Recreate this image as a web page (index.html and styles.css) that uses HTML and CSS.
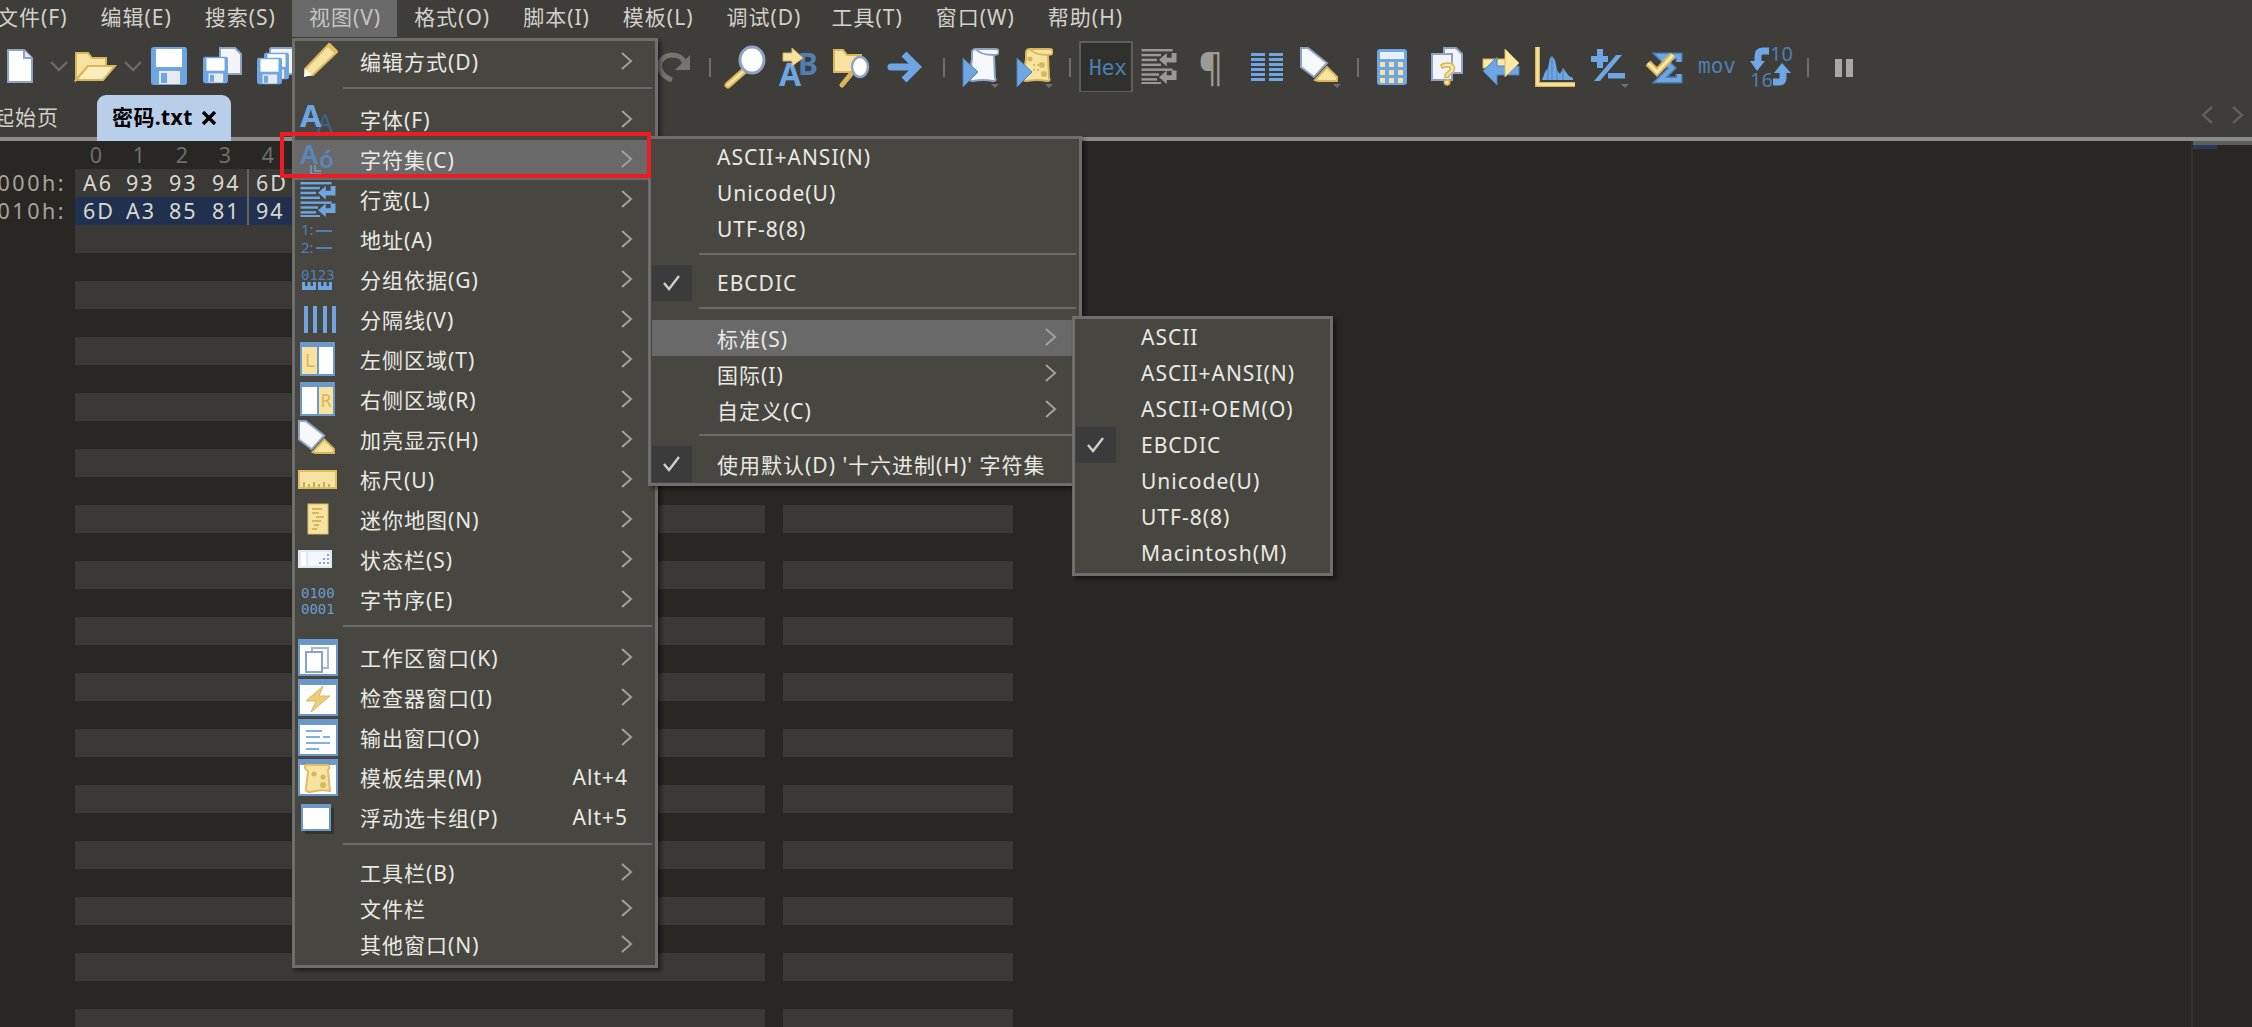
FILE: index.html
```html
<!DOCTYPE html>
<html lang="zh-CN">
<head>
  <meta charset="UTF-8" />
  <title>010 Editor</title>
  <link rel="stylesheet" href="styles.css">
</head>
<body>

  <svg class="defs" width="0" height="0">
    <symbol id="floppy" viewBox="0 0 36 38">
      <rect x="0" y="0" width="36" height="38" rx="3" fill="#6ea6e4"/>
      <rect x="5" y="2" width="26" height="18" fill="#fff"/>
      <rect x="8" y="24" width="21" height="13" fill="#e8eaf0"/>
      <rect x="10" y="26" width="6" height="10" fill="#6ea6e4"/>
    </symbol>
    <symbol id="wrap" viewBox="0 0 36 36">
      <g fill="currentColor">
        <rect x="0" y="0" width="32" height="2.5"/><rect x="0" y="5" width="20" height="2.5"/><rect x="0" y="10" width="16" height="2.5"/><rect x="0" y="15" width="20" height="2.5"/>
        <polygon points="31,4 36,4 36,14 26,14 26,18 18,11 26,4 26,9 31,9"/>
        <rect x="0" y="20" width="32" height="2.5"/><rect x="0" y="25" width="18" height="2.5"/><rect x="0" y="30" width="16" height="2.5"/><rect x="0" y="34" width="20" height="2"/>
        <polygon points="31,22 36,22 36,32 26,32 26,36 18,29 26,22 26,27 31,27"/>
      </g>
    </symbol>
    <symbol id="marker" viewBox="0 0 38 36">
      <polygon points="15,33 27,20 37,30 37,34 18,34" fill="#f6e3a1" stroke="#d9b65b" stroke-width="2"/>
      <polygon points="1,1 8,1 27,16 14,30 1,20" fill="#f7f8fc" stroke="#8ea3c4" stroke-width="2"/>
    </symbol>
    <symbol id="scroll" viewBox="0 0 32 36">
      <path d="M5 6 Q5 2 9 2 H28 Q32 2 32 5 Q32 8 27 8 L28 31 Q30 34 26 34 Q16 32 6 34 Q1 34 2 30 L5 12Z" fill="currentColor"/>
      <path d="M9 2 Q13 8 27 8" fill="none"/>
    </symbol>
    <symbol id="win" viewBox="0 0 40 38">
      <rect x="1" y="2" width="38" height="35" fill="#fff" stroke="#6c97c9" stroke-width="2"/>
      <rect x="1" y="1" width="38" height="6" rx="2" fill="#6c97c9"/>
    </symbol>
    <symbol id="chev" viewBox="0 0 12 18">
      <polyline points="1,1 10,9 1,17" fill="none" stroke="#a0a09c" stroke-width="2"/>
    </symbol>
    <symbol id="check" viewBox="0 0 40 36">
      <polyline points="12,18 17,24 27,11" fill="none" stroke="#cfcfca" stroke-width="2.4"/>
    </symbol>
  </svg>

  <nav class="menubar">
    <span class="menu-title">文件(F)</span>
    <span class="menu-title">编辑(E)</span>
    <span class="menu-title">搜索(S)</span>
    <span class="menu-title active">视图(V)</span>
    <span class="menu-title">格式(O)</span>
    <span class="menu-title">脚本(I)</span>
    <span class="menu-title">模板(L)</span>
    <span class="menu-title">调试(D)</span>
    <span class="menu-title narrow">工具(T)</span>
    <span class="menu-title">窗口(W)</span>
    <span class="menu-title">帮助(H)</span>
  </nav>

  <div class="toolbar">
    <svg width="45" height="52" viewBox="0 40 45 52"><path d="M8 50 H24 L32 58 V82 H8Z" fill="#fff" stroke="#8ea3c4" stroke-width="2"/><path d="M24 50 V58 H32" fill="#dfe5f0" stroke="#8ea3c4" stroke-width="2"/></svg>
    <svg width="25" height="52" viewBox="45 40 25 52"><polyline points="51,62 59,70 67,62" fill="none" stroke="#6b6b68" stroke-width="2.4"/></svg>
    <svg width="50" height="52" viewBox="70 40 50 52"><path d="M76 80 V53 H88 L92 58 H106 V66 H88 L76 80Z" fill="#f6e3a1" stroke="#d9b65b" stroke-width="2"/><path d="M76 80 L88 66 H115 L103 80Z" fill="#fbeebc" stroke="#d9b65b" stroke-width="2"/></svg>
    <svg width="28" height="52" viewBox="120 40 28 52"><polyline points="125,62 133,70 141,62" fill="none" stroke="#6b6b68" stroke-width="2.4"/></svg>
    <svg width="50" height="52" viewBox="148 40 50 52"><use href="#floppy" x="151" y="47" width="36" height="38"/></svg>
    <svg width="54" height="52" viewBox="198 40 54 52"><path d="M220 48 H235 L241 54 V74 H220Z" fill="#f2f4fa" stroke="#8ea3c4" stroke-width="2"/><use href="#floppy" x="203" y="56" width="25" height="28"/></svg>
    <svg width="44" height="52" viewBox="252 40 44 52"><rect x="270" y="48" width="24" height="26" rx="2" fill="#f2f4fa" stroke="#8ea3c4" stroke-width="2"/><use href="#floppy" x="264" y="52" width="25" height="28"/><use href="#floppy" x="257" y="57" width="25" height="28"/></svg>
    <span class="tb-hidden"></span>
    <svg width="48" height="52" viewBox="652 40 48 52"><path d="M672 80 C655 74 656 56 672 55 C680 55 683 58 685 64" fill="none" stroke="#75756f" stroke-width="5"/><polygon points="690,55 690,70 675,70" fill="#75756f"/></svg>
    <svg width="20" height="52" viewBox="700 40 20 52"><rect x="709" y="58" width="2" height="19" fill="#6e6e6a"/></svg>
    <svg width="55" height="52" viewBox="720 40 55 52"><path d="M745 70 L728 85" stroke="#d9b65b" stroke-width="7" stroke-linecap="round"/><path d="M745 70 L728 85" stroke="#f6e3a1" stroke-width="3" stroke-linecap="round"/><ellipse cx="752" cy="60" rx="12" ry="13" fill="#fff" stroke="#8ea3c4" stroke-width="3"/></svg>
    <svg width="53" height="52" viewBox="775 40 53 52"><text class="ico-bold" x="798" y="75" font-size="30" fill="#4f7fb4">B</text><text class="ico-bold" x="779" y="86" font-size="32" fill="#6ea6e4">A</text><polygon points="783,53 792,53 792,48 803,58 792,66 792,61 783,61" fill="#f6e3a1" stroke="#d9b65b"/></svg>
    <svg width="54" height="52" viewBox="828 40 54 52"><path d="M834 72 V50 H843 L847 55 H861 V72Z" fill="#f6e3a1" stroke="#d9b65b" stroke-width="2"/><path d="M851 74 L842 85" stroke="#d9b65b" stroke-width="5" stroke-linecap="round"/><ellipse cx="860" cy="67" rx="8" ry="10" fill="#fff" stroke="#8ea3c4" stroke-width="2.5"/></svg>
    <svg width="53" height="52" viewBox="882 40 53 52"><path d="M891 67 H916" stroke="#6ea6e4" stroke-width="7" stroke-linecap="round"/><polyline points="904,54 917,67 904,80" fill="none" stroke="#6ea6e4" stroke-width="7"/></svg>
    <svg width="20" height="52" viewBox="935 40 20 52"><rect x="943" y="58" width="2" height="19" fill="#6e6e6a"/></svg>
    <svg class="white" width="55" height="52" viewBox="955 40 55 52"><use href="#scroll" x="967" y="47" width="32" height="36" stroke="#8ea3c4" stroke-width="2"/><polygon points="963,58 978,72 963,87" fill="#6ea6e4" stroke="#4f7fb4"/><polygon points="991,84 999,84 995,88" fill="#6e6e6a"/></svg>
    <svg class="yellow" width="52" height="52" viewBox="1010 40 52 52"><use href="#scroll" x="1021" y="47" width="32" height="36" stroke="#d9b65b" stroke-width="2"/><circle cx="1030" cy="59" r="2.500" fill="#d9b65b"/><circle cx="1042" cy="65" r="3" fill="#d9b65b"/><circle cx="1044" cy="74" r="3" fill="#d9b65b"/><path d="M1033 65 h2 M1037 65 h2 M1033 70 h2 M1037 70 h2" stroke="#d9b65b" stroke-width="2"/><polygon points="1017,58 1032,72 1017,87" fill="#6ea6e4" stroke="#4f7fb4"/><polygon points="1045,84 1053,84 1049,88" fill="#6e6e6a"/></svg>
    <svg width="14" height="52" viewBox="1062 40 14 52"><rect x="1069" y="58" width="2" height="19" fill="#6e6e6a"/></svg>
    <svg width="60" height="52" viewBox="1076 40 60 52"><rect x="1080" y="42" width="52" height="50" fill="#30302c" stroke="#5e5e5c" stroke-width="2"/><text class="ico-mono" x="1108" y="75" font-size="21" text-anchor="middle" letter-spacing="1.200" fill="#4f7fb4">Hex</text></svg>
    <svg class="grey" width="54" height="52" viewBox="1136 40 54 52"><use href="#wrap" x="1141" y="49" width="36" height="35"/></svg>
    <svg width="50" height="52" viewBox="1190 40 50 52"><text class="ico-plain" x="1211" y="81" font-size="38" text-anchor="middle" fill="#9c9c97">¶</text></svg>
    <svg width="52" height="52" viewBox="1240 40 52 52"><g fill="#6ea6e4"><rect x="1251" y="53" width="14" height="3"/><rect x="1269" y="53" width="14" height="3"/><rect x="1251" y="58" width="14" height="3"/><rect x="1269" y="58" width="14" height="3"/><rect x="1251" y="63" width="14" height="3"/><rect x="1269" y="63" width="14" height="3"/><rect x="1251" y="68" width="14" height="3"/><rect x="1269" y="68" width="14" height="3"/><rect x="1251" y="73" width="14" height="3"/><rect x="1269" y="73" width="14" height="3"/><rect x="1251" y="78" width="14" height="3"/><rect x="1269" y="78" width="14" height="3"/></g></svg>
    <svg width="56" height="52" viewBox="1292 40 56 52"><use href="#marker" x="1300" y="47" width="38" height="36"/><polygon points="1333,84 1341,84 1337,88" fill="#6e6e6a"/></svg>
    <svg width="20" height="52" viewBox="1348 40 20 52"><rect x="1357" y="58" width="2" height="19" fill="#6e6e6a"/></svg>
    <svg width="52" height="52" viewBox="1368 40 52 52"><rect x="1377" y="49" width="30" height="36" rx="3" fill="#6ea6e4"/><rect x="1380" y="52" width="24" height="7" fill="#e8f0fa"/><g fill="#f6e3a1"><rect x="1380" y="62" width="5" height="5"/><rect x="1389" y="62" width="5" height="5"/><rect x="1398" y="62" width="5" height="5"/><rect x="1380" y="70" width="5" height="5"/><rect x="1389" y="70" width="5" height="5"/><rect x="1398" y="70" width="5" height="5"/><rect x="1380" y="78" width="5" height="5"/><rect x="1389" y="78" width="5" height="5"/><rect x="1398" y="78" width="5" height="5"/></g></svg>
    <svg width="55" height="52" viewBox="1420 40 55 52"><path d="M1444 48 H1456 L1462 54 V73 H1444Z" fill="#f2f4fa" stroke="#8ea3c4" stroke-width="2"/><rect x="1432" y="54" width="20" height="26" fill="#f2f4fa" stroke="#8ea3c4" stroke-width="2"/><text class="ico-bold marked" x="1448" y="85" font-size="30" text-anchor="middle">?</text></svg>
    <svg width="53" height="52" viewBox="1475 40 53 52"><rect x="1483" y="59" width="24" height="9" fill="#fbe9a8" stroke="#d9b65b"/><polygon points="1483,71 1497,57 1497,66 1519,66 1519,75 1497,75 1497,85" fill="#6ea6e4" stroke="#4f7fb4"/><polygon points="1505,49 1519,63 1505,77" fill="#fbe9a8" stroke="#d9b65b"/></svg>
    <svg width="57" height="52" viewBox="1528 40 57 52"><polygon points="1542,80 1545,72 1548,68 1550,58 1552,56 1555,60 1557,70 1560,74 1563,68 1566,72 1569,76 1573,78 1573,80" fill="#6ea6e4"/><path d="M1548 80 V68 M1552 80 V56 M1557 80 V70 M1563 80 V68" stroke="#4f7fb4"/><path d="M1537.500 47 V84.500 H1575" fill="none" stroke="#d9b65b" stroke-width="5"/><path d="M1537.500 47 V84.500 H1575" fill="none" stroke="#f6e3a1" stroke-width="2.500"/></svg>
    <svg width="55" height="52" viewBox="1585 40 55 52"><g fill="#6ea6e4"><rect x="1591" y="56" width="17" height="6"/><rect x="1597" y="49" width="6" height="19"/><polygon points="1616,55 1622,55 1600,81 1594,81"/><rect x="1608" y="73" width="17" height="5.500"/></g><polygon points="1621,84 1629,84 1625,88" fill="#6e6e6a"/></svg>
    <svg width="50" height="52" viewBox="1640 40 50 52"><path d="M1679 62 V56 H1660 L1672 68 L1660 80 H1679 V74" fill="none" stroke="#4f7fb4" stroke-width="7"/><path d="M1679 62 V56 H1660 L1672 68 L1660 80 H1679 V74" fill="none" stroke="#6ea6e4" stroke-width="4"/><polyline points="1648,63 1657,72 1673,55" fill="none" stroke="#d9b65b" stroke-width="7"/><polyline points="1648,63 1657,72 1673,55" fill="none" stroke="#fbe9a8" stroke-width="3"/></svg>
    <svg width="55" height="52" viewBox="1690 40 55 52"><text class="ico-mono" x="1717" y="73" font-size="21" text-anchor="middle" letter-spacing="1" fill="#4f7fb4">mov</text></svg>
    <svg width="53" height="52" viewBox="1745 40 53 52"><text class="ico-plain" x="1770" y="61" font-size="20" fill="#4f7fb4">10</text><text class="ico-plain" x="1750" y="87" font-size="20" fill="#4f7fb4">16</text><path d="M1769 51 H1763 Q1758 51 1758 56 V62" fill="none" stroke="#6ea6e4" stroke-width="7"/><polygon points="1750,61 1765,61 1757,71" fill="#6ea6e4"/><path d="M1773 82 H1779 Q1783 82 1783 78 V72" fill="none" stroke="#6ea6e4" stroke-width="7"/><polygon points="1774,73 1791,73 1782,63" fill="#6ea6e4"/></svg>
    <svg width="22" height="52" viewBox="1798 40 22 52"><rect x="1807" y="58" width="2" height="19" fill="#6e6e6a"/></svg>
    <svg width="40" height="52" viewBox="1820 40 40 52"><rect x="1835" y="59" width="7" height="18" fill="#a8a8a3"/><rect x="1846" y="59" width="7" height="18" fill="#a8a8a3"/></svg>
  </div>

  <div class="tabbar">
    <span class="tab">起始页</span>
    <span class="tab current">密码.txt<svg class="tab-close" width="16" height="14" viewBox="0 0 16 14"><path d="M2 1 L14 13 M14 1 L2 13" stroke="#000" stroke-width="3.400"/></svg></span>
    <svg class="tab-nav" width="12" height="18" viewBox="0 0 12 18"><polyline points="11,1 2,9 11,17" fill="none" stroke="#5f5f5b" stroke-width="2.400"/></svg>
    <svg class="tab-nav" width="12" height="18" viewBox="0 0 12 18"><polyline points="1,1 10,9 1,17" fill="none" stroke="#5f5f5b" stroke-width="2.400"/></svg>
  </div>

  <main class="editor">
    <div class="hexview" id="hexview">
      <div class="ruler">
        <span class="cell">0</span><span class="cell">1</span><span class="cell">2</span><span class="cell">3</span><span class="cell">4</span>
      </div>
    </div>
    <div class="minimap"><div class="mini-top"></div><div class="mini-sel"></div></div>
  </main>

  <!-- 视图 menu -->
  <div class="popup view-menu">
    <div class="item"><span class="ico"><svg width="44" height="40"><polygon points="8,27 32,2 40,10 16,33 8,33" fill="#f6e3a1" stroke="#d9b65b" stroke-width="2"/><polygon points="30,4 33,1 41,9 38,12" fill="#e0bd5f"/><polygon points="8,27 15,33 7,35" fill="#fff"/></svg></span><span class="label">编辑方式(D)</span><svg class="arrow"><use href="#chev"/></svg></div>
    <div class="sep"></div>
    <div class="item"><span class="ico"><svg width="44" height="40"><text class="ico-plain" x="20" y="32" font-size="25" fill="#3f618c">A</text><text class="ico-bold" x="3" y="27" font-size="31" fill="#6ea6e4">A</text></svg></span><span class="label">字体(F)</span><svg class="arrow"><use href="#chev"/></svg></div>
    <div class="item hot"><span class="ico"><svg width="44" height="40"><text class="ico-semi" x="3" y="24" font-size="27" fill="#5a86ba">A</text><text class="ico-semi" x="22" y="28" font-size="24" fill="#5a86ba">ó</text><path d="M14 25 V34 H24 M18 25 V31 H24" fill="none" stroke="#7a9cc4" stroke-width="1.500"/></svg></span><span class="label">字符集(C)</span><svg class="arrow"><use href="#chev"/></svg></div>
    <div class="item"><span class="ico"><svg class="blue" width="44" height="40"><use href="#wrap" x="3" y="2" width="36" height="35"/></svg></span><span class="label">行宽(L)</span><svg class="arrow"><use href="#chev"/></svg></div>
    <div class="item"><span class="ico"><svg width="44" height="40"><text class="ico-plain" x="4" y="15" font-size="15" fill="#4f7fb4">1:</text><text class="ico-plain" x="4" y="33" font-size="15" fill="#4f7fb4">2:</text><rect x="19" y="10" width="16" height="2" fill="#4f7fb4"/><rect x="19" y="27" width="16" height="2" fill="#4f7fb4"/></svg></span><span class="label">地址(A)</span><svg class="arrow"><use href="#chev"/></svg></div>
    <div class="item"><span class="ico"><svg width="44" height="40"><text class="ico-mono" x="4" y="20" font-size="14" fill="#4f7fb4">0123</text><path d="M5 22 h3 v4 h2.500 v-4 h3 v4 h2.500 v-4 h3 v8 h-14z M21 22 h3 v4 h2.500 v-4 h3 v4 h2.500 v-4 h3 v8 h-14z" fill="#6ea6e4"/></svg></span><span class="label">分组依据(G)</span><svg class="arrow"><use href="#chev"/></svg></div>
    <div class="item"><span class="ico"><svg width="44" height="40"><g fill="#6ea6e4"><rect x="7" y="6" width="4" height="27"/><rect x="16" y="6" width="4" height="27"/><rect x="26" y="6" width="4" height="27"/><rect x="35" y="6" width="4" height="27"/></g></svg></span><span class="label">分隔线(V)</span><svg class="arrow"><use href="#chev"/></svg></div>
    <div class="item"><span class="ico"><svg width="44" height="40"><rect x="4" y="3" width="33" height="32" fill="#fff" stroke="#6c97c9" stroke-width="2"/><rect x="4" y="2" width="33" height="5" fill="#6c97c9"/><rect x="5" y="7" width="15" height="27" fill="#f6e3a1"/><rect x="20" y="7" width="2" height="27" fill="#6c97c9"/><text class="ico-mono" x="8" y="27" font-size="17" fill="#d9b65b">L</text></svg></span><span class="label">左侧区域(T)</span><svg class="arrow"><use href="#chev"/></svg></div>
    <div class="item"><span class="ico"><svg width="44" height="40"><rect x="4" y="3" width="33" height="32" fill="#fff" stroke="#6c97c9" stroke-width="2"/><rect x="4" y="2" width="33" height="5" fill="#6c97c9"/><rect x="22" y="7" width="14" height="27" fill="#f6e3a1"/><rect x="20" y="7" width="2" height="27" fill="#6c97c9"/><text class="ico-mono" x="24" y="27" font-size="17" fill="#d9b65b">R</text></svg></span><span class="label">右侧区域(R)</span><svg class="arrow"><use href="#chev"/></svg></div>
    <div class="item"><span class="ico"><svg width="44" height="40"><use href="#marker" x="1" y="0" width="37" height="35"/></svg></span><span class="label">加亮显示(H)</span><svg class="arrow"><use href="#chev"/></svg></div>
    <div class="item"><span class="ico"><svg width="44" height="40"><rect x="2" y="11" width="37" height="17" fill="#f6e3a1" stroke="#e0bd5f" stroke-width="2"/><path d="M7 27 V22 M12 27 V24 M17 27 V22 M22 27 V24 M27 27 V22 M32 27 V24" stroke="#b89a4a" stroke-width="1.500"/></svg></span><span class="label">标尺(U)</span><svg class="arrow"><use href="#chev"/></svg></div>
    <div class="item"><span class="ico"><svg width="44" height="40"><rect x="11" y="4" width="20" height="30" fill="#f6e3a1" stroke="#e0bd5f"/><path d="M15 9 H25 M15 13 H22 M19 17 H27 M15 21 H24 M17 25 H22 M15 29 H20" stroke="#d9b65b" stroke-width="2"/></svg></span><span class="label">迷你地图(N)</span><svg class="arrow"><use href="#chev"/></svg></div>
    <div class="item"><span class="ico"><svg width="44" height="40"><rect x="1" y="10" width="34" height="18" fill="#dfe7f3"/><rect x="4" y="12" width="5" height="14" fill="#fff"/><rect x="11" y="12" width="22" height="14" fill="#f4f7fc"/><path d="M22 23 H24 M26 23 H28 M30 23 H32 M26 19 H28 M30 19 H32 M30 15 H32" stroke="#8ea3c4" stroke-width="2"/></svg></span><span class="label">状态栏(S)</span><svg class="arrow"><use href="#chev"/></svg></div>
    <div class="item"><span class="ico"><svg width="44" height="40"><text class="ico-mono" x="4" y="18" font-size="14" fill="#6a9bd0">0100</text><text class="ico-mono" x="4" y="34" font-size="14" fill="#6a9bd0">0001</text></svg></span><span class="label">字节序(E)</span><svg class="arrow"><use href="#chev"/></svg></div>
    <div class="sep"></div>
    <div class="item"><span class="ico"><svg width="44" height="40"><use href="#win" x="1" y="0" width="40" height="38"/><rect x="15" y="10" width="16" height="20" fill="#fff" stroke="#a9b8d2" stroke-width="2"/><rect x="9" y="14" width="16" height="20" fill="#fff" stroke="#8ea3c4" stroke-width="2"/></svg></span><span class="label">工作区窗口(K)</span><svg class="arrow"><use href="#chev"/></svg></div>
    <div class="item"><span class="ico"><svg width="44" height="40"><use href="#win" x="1" y="0" width="40" height="38"/><polygon points="26,8 9,23 19,23 14,34 33,18 22,18" fill="#eccf7e" stroke="#d9b65b"/></svg></span><span class="label">检查器窗口(I)</span><svg class="arrow"><use href="#chev"/></svg></div>
    <div class="item"><span class="ico"><svg width="44" height="40"><use href="#win" x="1" y="0" width="40" height="38"/><path d="M9 13 H25 M9 19 H23 M26 19 H33 M9 25 H33 M9 31 H22" stroke="#7fb0e8" stroke-width="2"/></svg></span><span class="label">输出窗口(O)</span><svg class="arrow"><use href="#chev"/></svg></div>
    <div class="item"><span class="ico"><svg width="44" height="40"><use href="#win" x="1" y="0" width="40" height="38"/><path d="M9 7 H31 Q34 9 31 12 L33 33 Q24 31 13 34 Q8 34 9 30 L11 13 Q6 10 9 7Z" fill="#f6e3a1" stroke="#e0bd5f" stroke-width="2"/><circle cx="17" cy="16" r="2.500" fill="#d9b65b"/><circle cx="26" cy="19" r="2.500" fill="#d9b65b"/><circle cx="26" cy="27" r="3" fill="#d9b65b"/></svg></span><span class="label">模板结果(M)</span><span class="key">Alt+4</span></div>
    <div class="item"><span class="ico"><svg width="44" height="40"><rect x="8" y="10" width="29" height="26" fill="#35342f"/><rect x="5" y="7" width="28" height="25" fill="#fff" stroke="#6c97c9" stroke-width="2"/><rect x="5" y="6" width="28" height="4" rx="1" fill="#6c97c9"/></svg></span><span class="label">浮动选卡组(P)</span><span class="key">Alt+5</span></div>
    <div class="sep sep-sm"></div>
    <div class="item plain"><span class="ico"></span><span class="label">工具栏(B)</span><svg class="arrow"><use href="#chev"/></svg></div>
    <div class="item plain"><span class="ico"></span><span class="label">文件栏</span><svg class="arrow"><use href="#chev"/></svg></div>
    <div class="item plain"><span class="ico"></span><span class="label">其他窗口(N)</span><svg class="arrow"><use href="#chev"/></svg></div>
  </div>

  <!-- 字符集 submenu -->
  <div class="popup charset-menu">
    <div class="item plain"><span class="ico"></span><span class="label">ASCII+ANSI(N)</span></div>
    <div class="item plain"><span class="ico"></span><span class="label">Unicode(U)</span></div>
    <div class="item plain"><span class="ico"></span><span class="label">UTF-8(8)</span></div>
    <div class="sep"></div>
    <div class="item plain"><span class="ico"><svg class="tick" width="40" height="36"><use href="#check"/></svg></span><span class="label">EBCDIC</span></div>
    <div class="sep sep-lg"></div>
    <div class="item plain hot"><span class="ico"></span><span class="label">标准(S)</span><svg class="arrow"><use href="#chev"/></svg></div>
    <div class="item plain"><span class="ico"></span><span class="label">国际(I)</span><svg class="arrow"><use href="#chev"/></svg></div>
    <div class="item plain"><span class="ico"></span><span class="label">自定义(C)</span><svg class="arrow"><use href="#chev"/></svg></div>
    <div class="sep"></div>
    <div class="item plain"><span class="ico"><svg class="tick" width="40" height="36"><use href="#check"/></svg></span><span class="label">使用默认(D) '十六进制(H)' 字符集</span></div>
  </div>

  <!-- 标准 submenu -->
  <div class="popup standard-menu">
    <div class="item plain"><span class="ico"></span><span class="label">ASCII</span></div>
    <div class="item plain"><span class="ico"></span><span class="label">ASCII+ANSI(N)</span></div>
    <div class="item plain"><span class="ico"></span><span class="label">ASCII+OEM(O)</span></div>
    <div class="item plain"><span class="ico"><svg class="tick" width="40" height="36"><use href="#check"/></svg></span><span class="label">EBCDIC</span></div>
    <div class="item plain"><span class="ico"></span><span class="label">Unicode(U)</span></div>
    <div class="item plain"><span class="ico"></span><span class="label">UTF-8(8)</span></div>
    <div class="item plain"><span class="ico"></span><span class="label">Macintosh(M)</span></div>
  </div>

  <div class="redbox"></div>

  <script>
    const data = [
      { addr: "0000h:", bytes: ["A6", "93", "93", "94", "6D"] },
      { addr: "0010h:", bytes: ["6D", "A3", "85", "81", "94"], selected: true }
    ];
    const view = document.getElementById("hexview");

    for (let i = 0; i < 31; i++) {
      const line = data[i] || { addr: "", bytes: [] };
      const row = document.createElement("div");
      row.className = "row" + (i % 2 === 0 ? " striped" : "") + (line.selected ? " selected" : "");
      const cells = line.bytes.map((b, n) => `<span class="cell${n === 4 ? " last" : ""}">${b}</span>`).join("");
      row.innerHTML = `
        <span class="addr">${line.addr}</span>
        <span class="hex">${cells}</span>
        <span class="gap"></span>
        <span class="ascii"></span>
      `;
      view.appendChild(row);
    }
  </script>

</body>
</html>
```

FILE: styles.css
```css
html, body {
  margin: 0;
  height: 100%;
}

body {
  width: 2252px;
  height: 1027px;
  overflow: hidden;
  position: relative;
  background: #3e3d39;
  color: #d2d1cb;
  font-family: "Noto Sans", "Noto Sans CJK SC", sans-serif;
  font-size: 21px;
  letter-spacing: 1px;
}

.defs {
  position: absolute;
}

svg {
  display: block;
  flex: none;
}

.ico-bold { font-family: "Noto Sans", sans-serif; font-weight: 700; letter-spacing: 0; }
.ico-semi { font-family: "Noto Sans", sans-serif; font-weight: 600; letter-spacing: 0; }
.ico-plain { font-family: "Noto Sans", sans-serif; letter-spacing: 0; }
.ico-mono { font-family: "DejaVu Sans Mono", monospace; letter-spacing: 0; }

.marked {
  fill: #fbe9a8;
  stroke: #d9b65b;
  stroke-width: 1.5px;
}

.white { color: #f7f8fc; }
.yellow { color: #f6e3a1; }
.grey { color: #9a9a95; }
.blue { color: #6ea6e4; }

/* top menu */
.menubar {
  display: flex;
  height: 37px;
  margin-left: -20px;
  line-height: 35px;
}

.menu-title {
  padding: 0 16px 0 17px;
  white-space: nowrap;
}

.menu-title.narrow {
  margin-left: -3px;
}

.menu-title.active {
  background: #6a6a6a;
  color: #c4c4c0;
}

/* toolbar */
.toolbar {
  display: flex;
  height: 50px;
  padding-top: 3px;
}

.tb-hidden {
  width: 356px;
  flex: none;
}

/* tabs */
.tabbar {
  display: flex;
  align-items: flex-end;
  height: 47px;
  border-bottom: 4px solid #8b8b89;
}

.tab {
  display: flex;
  align-items: center;
  height: 46px;
  margin-bottom: -4px;
  padding-bottom: 4px;
  box-sizing: border-box;
  flex: none;
}

.tab:first-child {
  margin-left: -7px;
  width: 104px;
}

.tab.current {
  width: 134px;
  padding-left: 15px;
  background: #b9cfe9;
  color: #000;
  font-weight: 700;
  letter-spacing: 0.4px;
  border-radius: 9px 9px 0 0;
}

.tab-close {
  margin-left: 8px;
  margin-top: 3px;
}

.tab-nav {
  margin-bottom: 13px;
}

.tab-nav:nth-of-type(1) {
  margin-left: auto;
  margin-right: 19px;
}

.tab-nav:last-child {
  margin-right: 8px;
}

/* editor */
.editor {
  display: flex;
  height: 886px;
  background: #282723;
  overflow: hidden;
  font-family: "Noto Sans", sans-serif;
  font-size: 21.5px;
}

.hexview {
  width: 2191px;
  flex: none;
  overflow: hidden;
}

.ruler {
  display: flex;
  height: 28px;
  padding-left: 75px;
  color: #6e6e6a;
  line-height: 28px;
}

.ruler .cell {
  width: 43px;
  text-align: center;
}

.row {
  display: grid;
  grid-template-columns: 75px 690px 18px 230px;
  height: 28px;
  line-height: 28px;
}

.addr {
  display: flex;
  justify-content: flex-end;
  overflow: hidden;
  padding-right: 9px;
  white-space: nowrap;
  letter-spacing: 2.5px;
  color: #a5a49f;
}

.row.striped .hex,
.row.striped .ascii {
  background: #3a3935;
}

.row.selected .hex,
.row.selected .ascii {
  background: #20304e;
}

.hex {
  display: flex;
  color: #d8d8d2;
}

.hex .cell {
  display: block;
  width: 43px;
  box-sizing: border-box;
  padding-left: 8px;
  letter-spacing: 2px;
}

.hex .cell.last {
  width: 50px;
  padding-left: 7px;
  border-left: 2px solid #64635f;
}

.minimap {
  flex: 1;
  border-left: 2px solid #32312e;
}

.mini-top {
  height: 4px;
  background: #5e5e5a;
}

.mini-sel {
  width: 24px;
  height: 4px;
  background: #2a3a5e;
}

/* popup menus */
.popup {
  position: absolute;
  box-sizing: border-box;
  background: #474641;
  border: 3px solid #6e6e6c;
  box-shadow: 3px 3px 4px rgba(0, 0, 0, 0.45);
  color: #e9e9e4;
}

.view-menu {
  left: 292px;
  top: 38px;
  width: 366px;
  height: 930px;
  padding-top: 1px;
}

.charset-menu {
  left: 648px;
  top: 136px;
  width: 434px;
  height: 350px;
  padding-left: 1px;
}

.standard-menu {
  left: 1072px;
  top: 316px;
  width: 261px;
  height: 260px;
  padding-left: 1px;
}

.item {
  display: flex;
  align-items: center;
  height: 40px;
  padding-right: 22px;
  white-space: nowrap;
}

.item.plain {
  height: 36px;
}

.item.hot {
  background: #696969;
}

.ico {
  display: flex;
  width: 65px;
  height: 100%;
  flex: none;
  padding-left: 2px;
  box-sizing: border-box;
}

.plain .ico {
  padding-left: 0;
}

.tick {
  background: #3b3b3c;
}

.label {
  flex: 1;
  margin-top: -2px;
}

.charset-menu .label,
.standard-menu .label {
  margin-top: 0;
}

.key {
  margin-top: -2px;
  margin-right: 5px;
}

.arrow {
  width: 12px;
  height: 18px;
  margin-top: -3px;
}

.sep {
  height: 2px;
  margin: 5px 3px 11px 48px;
  background: #6a6a67;
}

.sep-sm {
  margin-bottom: 10px;
}

.charset-menu .sep {
  margin-top: 6px;
  margin-bottom: 10px;
  margin-left: 47px;
}

.charset-menu .sep-lg {
  margin-bottom: 11px;
}

.redbox {
  position: absolute;
  left: 280px;
  top: 132px;
  width: 371px;
  height: 46px;
  box-sizing: border-box;
  border: 4px solid #ed1c24;
}
```
